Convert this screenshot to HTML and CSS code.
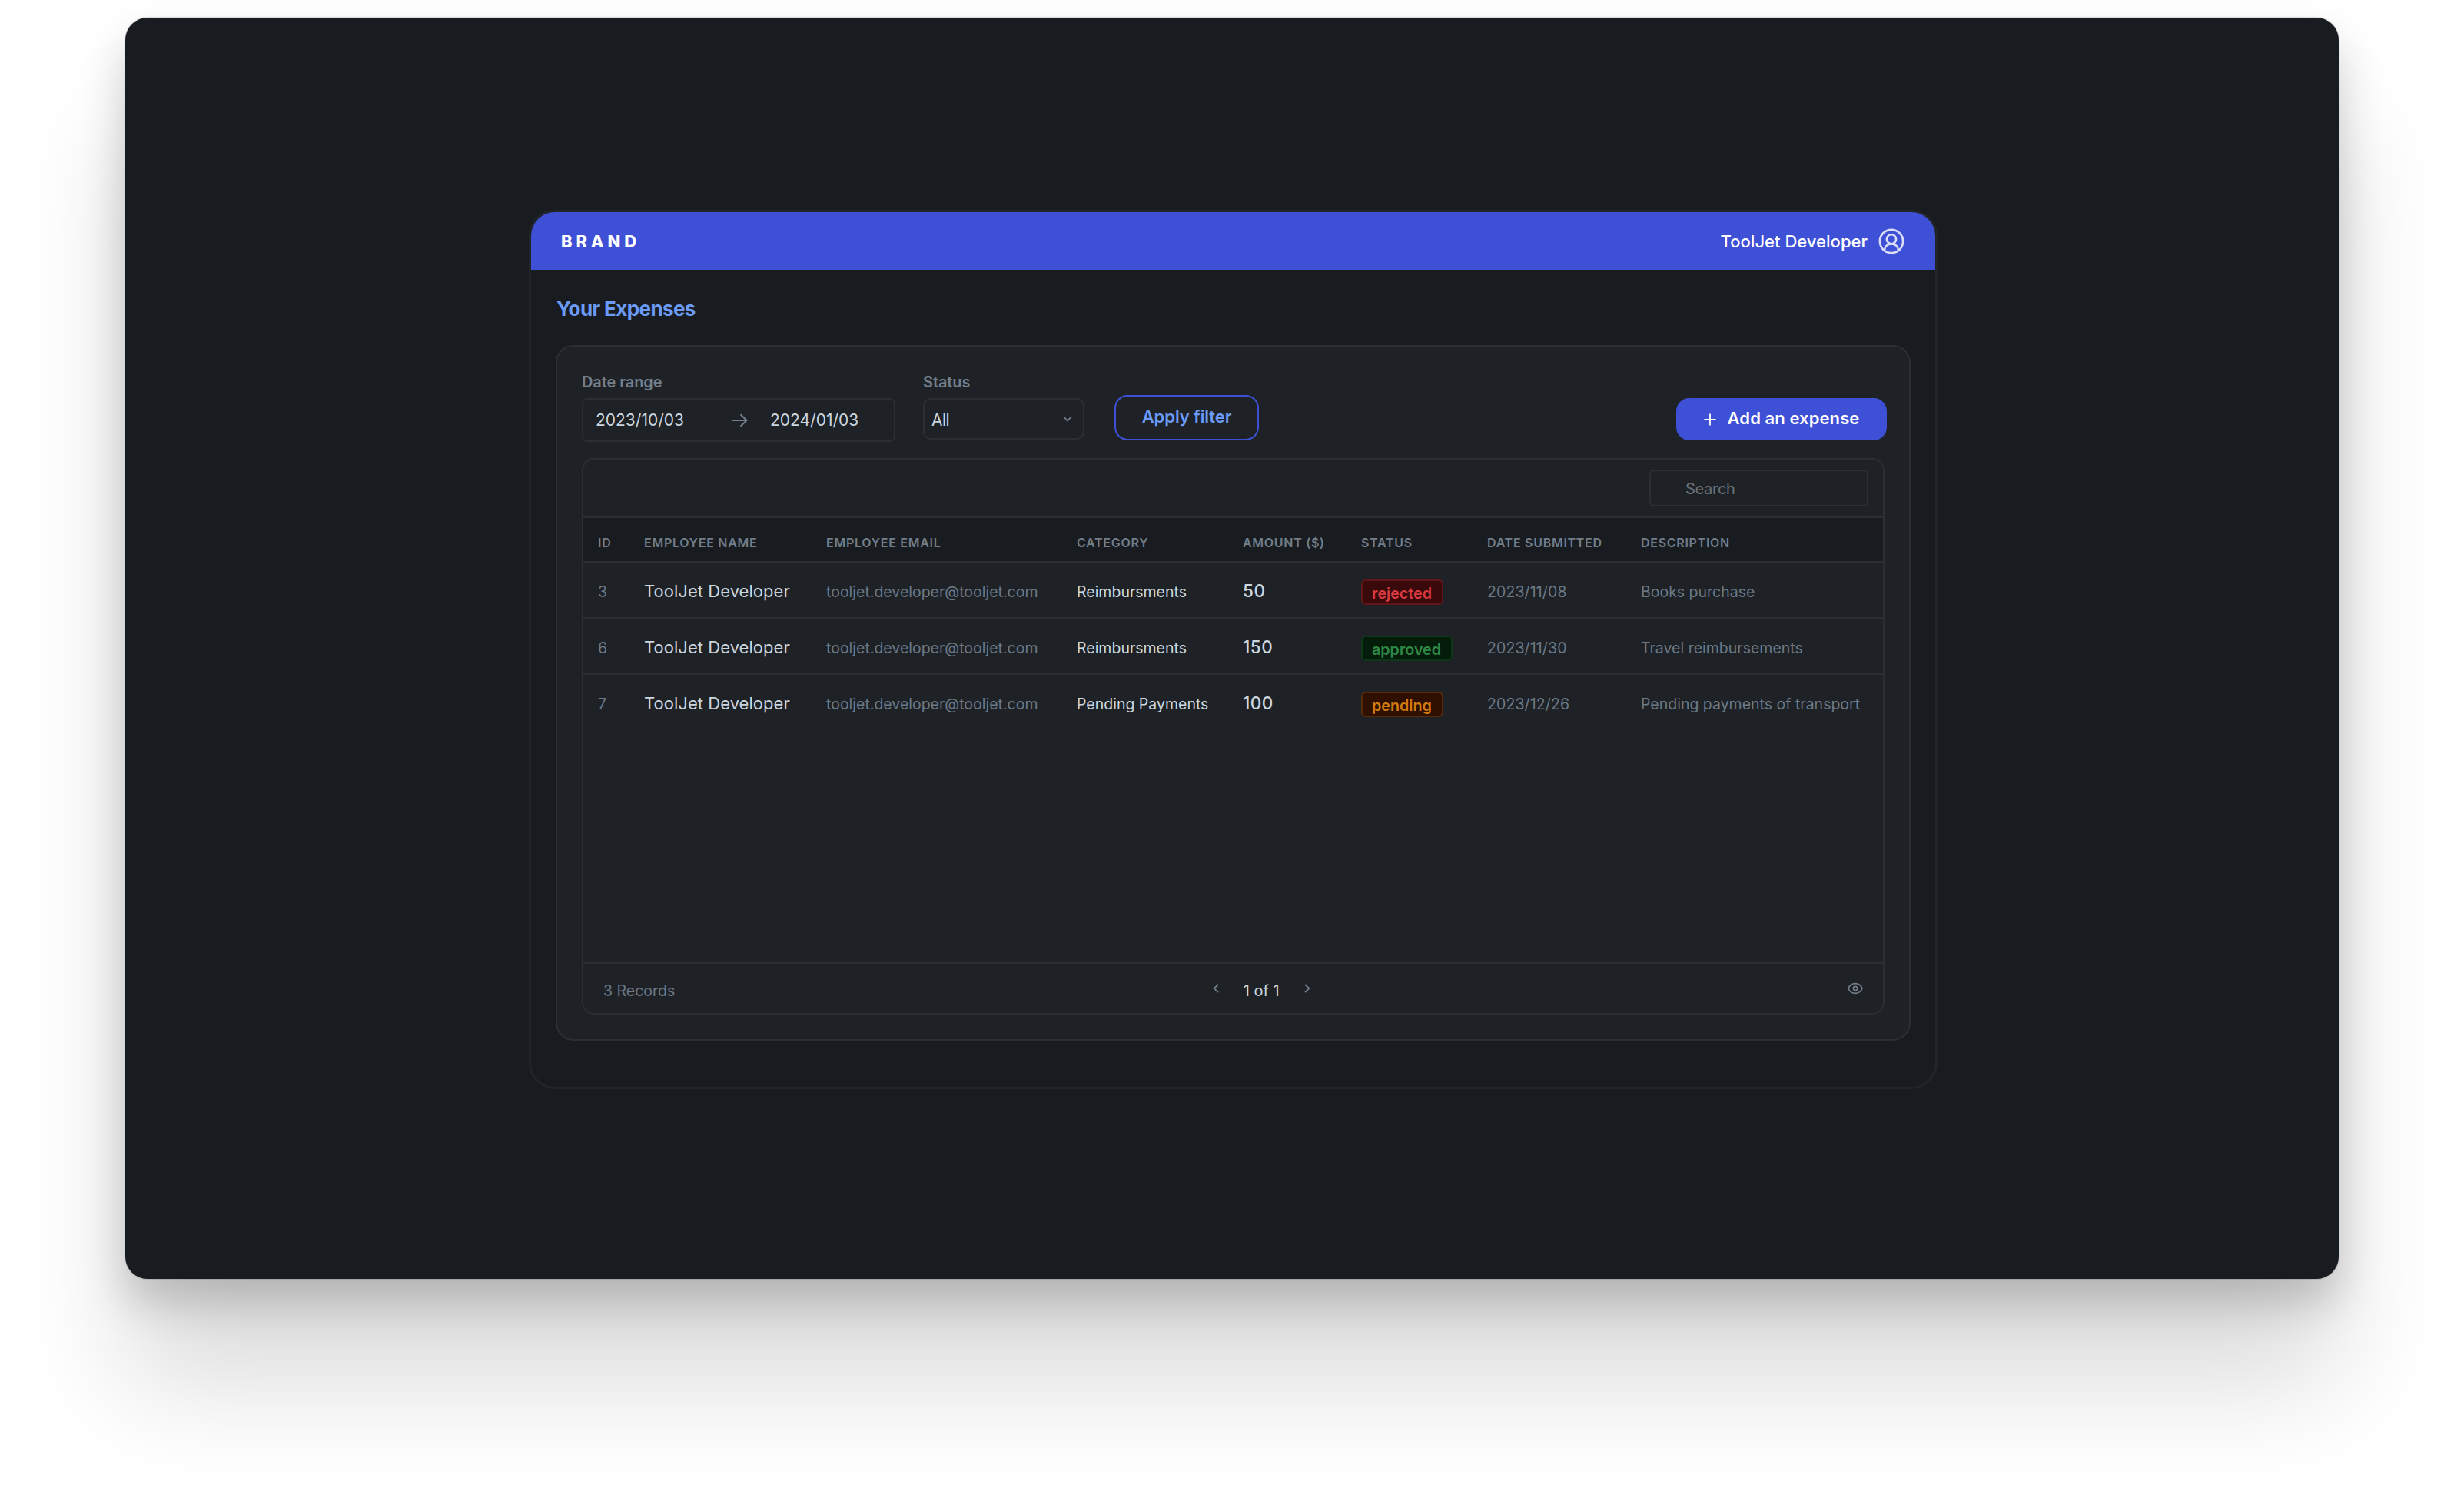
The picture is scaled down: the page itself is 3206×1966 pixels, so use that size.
FILE: index.html
```html
<!DOCTYPE html>
<html lang="en">
<head>
    <meta charset="UTF-8">
    <meta name="viewport" content="width=device-width, initial-scale=1.0">
    <title>Your Expenses</title>
    <link rel="stylesheet" href="styles.css">
</head>
<body>
    <div class="window">
        <div class="app">
            <header class="header">
                <span class="brand">BRAND</span>
                <div class="user">
                    <span>ToolJet Developer</span>
                    <svg class="user-icon" viewBox="0 0 34 34" fill="none" stroke="currentColor" stroke-width="2.7">
                        <circle cx="17" cy="17" r="15.1"/>
                        <circle cx="17" cy="14.2" r="6.1"/>
                        <path d="M8 28.5C8.6 23.6 12.2 20.4 17 20.4s8.4 3.2 9 8.1"/>
                    </svg>
                </div>
            </header>

            <h1 class="title">Your Expenses</h1>

            <main class="panel">
                <div class="filters">
                    <div class="field">
                        <span class="label">Date range</span>
                        <div class="date-range">
                            <span class="date-start">2023/10/03</span>
                            <svg class="arrow-icon" viewBox="0 0 20 18" fill="none" stroke="currentColor" stroke-width="2">
                                <path d="M0 9h18.5M10.5 1.3L18.5 9l-8 7.7"/>
                            </svg>
                            <span class="date-end">2024/01/03</span>
                        </div>
                    </div>
                    <div class="field">
                        <span class="label">Status</span>
                        <div class="select">
                            <span class="select-value">All</span>
                            <svg class="down-icon" viewBox="0 0 12 8" fill="none" stroke="currentColor" stroke-width="1.8">
                                <path d="M.8 1L6 6.4 11.2 1"/>
                            </svg>
                        </div>
                    </div>
                    <button class="btn btn-outline">Apply filter</button>
                    <button class="btn btn-primary">
                        <svg class="plus-icon" viewBox="0 0 16 16" fill="none" stroke="currentColor" stroke-width="1.8">
                            <path d="M8 .4v15.2M.4 8h15.2"/>
                        </svg>
                        <span class="btn-text">Add an expense</span>
                    </button>
                </div>

                <section class="table-card">
                    <div class="toolbar">
                        <input class="search" type="text" placeholder="Search">
                    </div>

                    <div class="table-body">
                        <table class="table">
                            <colgroup>
                                <col class="col-id">
                                <col class="col-name">
                                <col class="col-email">
                                <col class="col-category">
                                <col class="col-amount">
                                <col class="col-status">
                                <col class="col-date">
                                <col class="col-desc">
                            </colgroup>
                            <thead>
                                <tr>
                                    <th>ID</th>
                                    <th>EMPLOYEE NAME</th>
                                    <th>EMPLOYEE EMAIL</th>
                                    <th>CATEGORY</th>
                                    <th>AMOUNT ($)</th>
                                    <th>STATUS</th>
                                    <th>DATE SUBMITTED</th>
                                    <th>DESCRIPTION</th>
                                </tr>
                            </thead>
                            <tbody>
                                <tr>
                                    <td>3</td>
                                    <td class="name">ToolJet Developer</td>
                                    <td>tooljet.developer@tooljet.com</td>
                                    <td class="category">Reimbursments</td>
                                    <td class="amount">50</td>
                                    <td><span class="badge rejected">rejected</span></td>
                                    <td class="date">2023/11/08</td>
                                    <td>Books purchase</td>
                                </tr>
                                <tr>
                                    <td>6</td>
                                    <td class="name">ToolJet Developer</td>
                                    <td>tooljet.developer@tooljet.com</td>
                                    <td class="category">Reimbursments</td>
                                    <td class="amount">150</td>
                                    <td><span class="badge approved">approved</span></td>
                                    <td class="date">2023/11/30</td>
                                    <td>Travel reimbursements</td>
                                </tr>
                                <tr>
                                    <td>7</td>
                                    <td class="name">ToolJet Developer</td>
                                    <td>tooljet.developer@tooljet.com</td>
                                    <td class="category">Pending Payments</td>
                                    <td class="amount">100</td>
                                    <td><span class="badge pending">pending</span></td>
                                    <td class="date">2023/12/26</td>
                                    <td>Pending payments of transport</td>
                                </tr>
                            </tbody>
                        </table>
                    </div>

                    <footer class="table-footer">
                        <span class="records">3 Records</span>
                        <div class="pager">
                            <svg class="page-icon" viewBox="0 0 8 12" fill="none" stroke="currentColor" stroke-width="1.8">
                                <path d="M7 .8L1.6 6 7 11.2"/>
                            </svg>
                            <span class="page">1 of 1</span>
                            <svg class="page-icon" viewBox="0 0 8 12" fill="none" stroke="currentColor" stroke-width="1.8">
                                <path d="M1 .8L6.4 6 1 11.2"/>
                            </svg>
                        </div>
                        <svg class="eye-icon" viewBox="0 0 20 16" fill="none" stroke="currentColor" stroke-width="1.7">
                            <path d="M1 8C2.6 3.6 5.8 1.6 10 1.6S17.4 3.6 19 8c-1.6 4.4-4.8 6.4-9 6.4S2.6 12.4 1 8z"/>
                            <circle cx="10" cy="8" r="2.7"/>
                        </svg>
                    </footer>
                </section>
            </main>
        </div>
    </div>
</body>
</html>
```
FILE: styles.css
```css
* {
    margin: 0;
    padding: 0;
    box-sizing: border-box;
    font-family: Inter, "Liberation Sans", sans-serif;
}

body {
    background: #fff;
    padding: 23px 163px 0;
    height: 1966px;
    overflow: hidden;
}

svg {
    display: block;
    flex-shrink: 0;
}

.window {
    width: 2880px;
    height: 1641px;
    padding: 250px 0 0 525px;
    background: #181c20;
    border-radius: 29px;
    box-shadow: 0 0 2px rgba(0, 0, 0, 0.4),
                0 30px 56px rgba(0, 0, 0, 0.19),
                0 136px 145px rgba(0, 0, 0, 0.14);
}

.app {
    width: 1833px;
    height: 1144px;
    border: 3px solid #212529;
    border-radius: 34px;
    overflow: hidden;
    display: flex;
    flex-direction: column;
}

/* Header */
.header {
    display: flex;
    justify-content: space-between;
    align-items: center;
    height: 75px;
    flex-shrink: 0;
    padding: 0 40px 0 38px;
    background: #3d50d6;
    color: #fff;
}

.brand {
    padding-left: 1px;
    font-size: 22px;
    font-weight: 800;
    letter-spacing: 4.8px;
}

.user {
    display: flex;
    align-items: center;
    gap: 14px;
    font-size: 22px;
    font-weight: 500;
    letter-spacing: 0.02px;
}

.user-icon {
    width: 34px;
    height: 34px;
    color: #d9ddf7;
}

.title {
    padding: 36px 33px 32px;
    font-size: 26px;
    line-height: 30px;
    font-weight: 650;
    letter-spacing: -0.6px;
    color: #6c9bf7;
}

/* Panel */
.panel {
    display: flex;
    flex-direction: column;
    height: 905px;
    margin: 0 32px;
    padding: 0 32px;
    background: #1e2226;
    border: 2px solid #2b2f33;
    border-radius: 23px;
}

.filters {
    display: flex;
    align-items: flex-start;
    height: 145px;
    padding-top: 34px;
}

.field {
    display: flex;
    flex-direction: column;
    gap: 9px;
    margin-right: 36px;
}

.label {
    font-size: 20px;
    line-height: 24px;
    font-weight: 560;
    letter-spacing: -0.1px;
    color: #727e8a;
}

.date-range {
    display: flex;
    align-items: center;
    width: 408px;
    height: 57px;
    padding-left: 16px;
    border: 2px solid #2b2f33;
    border-radius: 7px;
    font-size: 21px;
    color: #ccd6df;
}

.date-start {
    width: 178px;
}

.arrow-icon {
    width: 20px;
    height: 18px;
    margin-right: 29px;
    color: #727e8a;
}

.select {
    display: flex;
    align-items: center;
    justify-content: space-between;
    width: 210px;
    height: 54px;
    padding: 0 14px 0 9px;
    border: 2px solid #2b2f33;
    border-radius: 10px;
}

.select-value {
    padding-top: 3px;
    font-size: 21px;
    letter-spacing: -0.5px;
    color: #ccd6df;
}

.down-icon {
    width: 12px;
    height: 8px;
    color: #727e8a;
}

.btn {
    display: flex;
    align-items: center;
    justify-content: center;
    border: none;
    border-radius: 17px;
    font-size: 22px;
    font-weight: 600;
}

.btn-outline {
    width: 188px;
    height: 59px;
    margin: 29px 0 0 3px;
    padding-bottom: 3px;
    background: transparent;
    border: 2px solid #3d50d6;
    color: #6c9bf7;
    letter-spacing: -0.09px;
}

.btn-primary {
    gap: 15px;
    width: 274px;
    height: 55px;
    margin: 33px -3px 0 auto;
    background: #3d50d6;
    color: #fff;
    letter-spacing: 0.08px;
}

.btn-text {
    padding-bottom: 4px;
}

.plus-icon {
    width: 16px;
    height: 16px;
}

/* Table */
.table-card {
    display: flex;
    flex-direction: column;
    height: 724px;
    border: 2px solid #2b2f33;
    border-radius: 16px;
    overflow: hidden;
}

.toolbar {
    display: flex;
    align-items: center;
    justify-content: flex-end;
    height: 76px;
    padding-right: 19px;
    border-bottom: 2px solid #2b2f33;
}

.search {
    width: 285px;
    height: 48px;
    padding: 2px 16px 0 45px;
    background: transparent;
    border: 2px solid #2b2f33;
    border-radius: 6px;
    font-size: 20px;
    letter-spacing: -0.3px;
    outline: none;
}

.search::placeholder {
    color: #6b7379;
}

.table-body {
    flex: 1;
}

.table {
    width: 1691px;
    table-layout: fixed;
    border-collapse: separate;
    border-spacing: 0;
}

.col-id { width: 60px; }
.col-name { width: 237px; }
.col-email { width: 326px; }
.col-category { width: 216px; }
.col-amount { width: 154px; }
.col-status { width: 164px; }
.col-date { width: 200px; }
.col-desc { width: 334px; }

.table th {
    height: 58px;
    padding: 7px 0 0 19px;
    background: #181c20;
    border-bottom: 2px solid #2b2f33;
    text-align: left;
    font-size: 16px;
    font-weight: 640;
    letter-spacing: 0.72px;
    color: #727e8a;
}

.table td {
    height: 73px;
    padding: 4px 0 0 19px;
    border-bottom: 2px solid #2b2f33;
    font-size: 19.5px;
    color: #6c7986;
    white-space: nowrap;
}

.table tbody tr:last-child td {
    border-bottom-color: transparent;
}

.table .name {
    padding-top: 2px;
    font-size: 22px;
    letter-spacing: 0.04px;
    color: #ccd6df;
}

.table .category {
    color: #ccd6df;
}

.table .amount {
    padding-top: 2px;
    font-size: 22.5px;
    font-weight: 500;
    letter-spacing: 0.5px;
    color: #ccd6df;
}

.table .date {
    letter-spacing: 0.12px;
}

.badge {
    display: block;
    width: fit-content;
    height: 33px;
    margin-top: 1px;
    padding: 3px 13px 0 12px;
    border: 2px solid;
    border-radius: 6px;
    font-size: 19.7px;
    line-height: 27px;
    font-weight: 600;
}

.rejected {
    background: #3a090b;
    border-color: #631619;
    color: #d93a40;
}

.approved {
    background: #041c0a;
    border-color: #0e3718;
    color: #2f8845;
}

.pending {
    background: #2f1000;
    border-color: #582b04;
    color: #d27b0e;
}

.table-footer {
    display: flex;
    align-items: center;
    justify-content: space-between;
    height: 66px;
    padding: 0 26px;
    border-top: 2px solid #2b2f33;
}

.records {
    padding-top: 5px;
    font-size: 19.5px;
    color: #6c7986;
}

.pager {
    display: flex;
    align-items: center;
    gap: 32px;
    color: #727e8a;
}

.page {
    padding-top: 5px;
    font-size: 20px;
    color: #ccd6df;
}

.page-icon {
    width: 8px;
    height: 12px;
}

.eye-icon {
    width: 20px;
    height: 16px;
    color: #727e8a;
}
```
